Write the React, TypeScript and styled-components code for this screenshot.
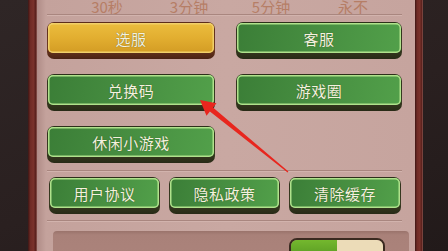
import React from "react";
import styled, { createGlobalStyle, css } from "styled-components";

const Global = createGlobalStyle`
  html, body { margin: 0; padding: 0; width: 448px; height: 251px; overflow: hidden; background: #2a2121; }
  * { box-sizing: border-box; }
`;

const Screen = styled.div`
  position: relative;
  width: 448px;
  height: 251px;
  display: flex;
  overflow: hidden;
  font-family: "Noto Sans CJK SC", "Noto Sans", sans-serif;
  background: linear-gradient(160deg, #2f2626 0%, #2a2020 55%, #221a1a 100%);
`;

const Side = styled.div<{ $w: number }>`
  width: ${(p) => p.$w}px;
  flex: none;
`;

const Rim = styled.div<{ $w: number }>`
  width: ${(p) => p.$w}px;
  flex: none;
  background: linear-gradient(90deg, #3c1614 0%, #6e2a24 25%, #7a322b 60%, #5a211d 85%, #8e5a53 100%);
`;

const Panel = styled.div`
  flex: 1;
  display: flex;
  flex-direction: column;
  padding: 0 13px 0 10px;
  background: linear-gradient(90deg, #b08c87 0px, #c4a29c 9px, #c9a8a2 50%, #c6a49e 100%);
`;

const Header = styled.div`
  height: 19px;
  display: grid;
  grid-template-columns: repeat(4, 82px);
  padding-left: 19px;
  align-items: start;
`;

const Label = styled.div`
  text-align: center;
  font-size: 15px;
  line-height: 16px;
  margin-top: -1px;
  color: #b67e66;
`;

const Rule = styled.div<{ $mt: number; $mb: number }>`
  height: 2px;
  margin: ${(p) => p.$mt}px 0 ${(p) => p.$mb}px;
  border-top: 1px solid #a9867f;
  border-bottom: 1px solid #d2b3ad;
`;

const Grid = styled.div`
  display: grid;
  grid-template-columns: 168px 166px;
  column-gap: 21px;
  row-gap: 15px;
`;

const Row3 = styled.div`
  display: grid;
  grid-template-columns: 111px 111px 112px;
  column-gap: 9px;
  padding-left: 2px;
`;

type Tone = "gold" | "green";

const Btn = styled.div<{ $tone: Tone }>`
  height: 37px;
  border-radius: 7px;
  padding: 1px 1px 6px 1px;
  ${(p) =>
    p.$tone === "gold"
      ? css`
          background: linear-gradient(180deg, #5c2c1a, #6e3a1f 70%, #4a2214);
        `
      : css`
          background: linear-gradient(180deg, #2c3019, #3a3d22 70%, #282a16);
        `}
`;

const Face = styled.div<{ $tone: Tone }>`
  height: 100%;
  border-radius: 5px;
  display: flex;
  align-items: center;
  justify-content: center;
  font-size: 15px;
  color: #f4f1de;
  letter-spacing: 0.5px;
  text-shadow: 0 0 1px rgba(30, 40, 10, 0.6);
  ${(p) =>
    p.$tone === "gold"
      ? css`
          background: linear-gradient(180deg, #ebbd3e 0%, #e2ae30 50%, #d39c24 100%);
          box-shadow: inset 0 0 0 1.5px #f1d06a;
        `
      : css`
          background: linear-gradient(100deg, #3b7e37 0%, #468d40 45%, #52a04a 100%);
          box-shadow: inset 0 0 0 1.5px #b0e28c;
        `}
`;

const Bottom = styled.div`
  margin: 9px -7px 0 6px;
  flex: 1;
  display: flex;
  justify-content: flex-end;
  padding: 7px 24px 0 0;
  border-radius: 4px 4px 0 0;
  background: linear-gradient(180deg, #9a736b 0px, #a98179 4px, #ab837b 100%);
`;

const Toggle = styled.div`
  width: 96px;
  height: 20px;
  border-radius: 8px;
  border: 2px solid #3a2a20;
  display: flex;
  overflow: hidden;
`;

const ToggleHalf = styled.div<{ $on?: boolean }>`
  flex: 1;
  background: ${(p) => (p.$on ? "linear-gradient(180deg,#74b82e,#5a9c24)" : "#ecdcb8")};
`;

const Overlay = styled.svg`
  position: absolute;
  left: 0;
  top: 0;
  pointer-events: none;
`;

const Button = ({ tone = "green", children }: { tone?: Tone; children: React.ReactNode }) => (
  <Btn $tone={tone}>
    <Face $tone={tone}>{children}</Face>
  </Btn>
);

export default function App() {
  return (
    <>
      <Global />
      <Screen>
        <Side $w={28} />
        <Rim $w={9} />
        <Panel>
          <Header>
            <Label>30秒</Label>
            <Label>3分钟</Label>
            <Label>5分钟</Label>
            <Label>永不</Label>
          </Header>
          <Rule $mt={-1} $mb={6} />
          <Grid>
            <Button tone="gold">选服</Button>
            <Button>客服</Button>
            <Button>兑换码</Button>
            <Button>游戏圈</Button>
            <Button>休闲小游戏</Button>
          </Grid>
          <Rule $mt={7} $mb={5} />
          <Row3>
            <Button>用户协议</Button>
            <Button>隐私政策</Button>
            <Button>清除缓存</Button>
          </Row3>
          <Rule $mt={6} $mb={0} />
          <Bottom>
            <Toggle>
              <ToggleHalf $on />
              <ToggleHalf />
            </Toggle>
          </Bottom>
        </Panel>
        <Rim $w={8} />
        <Side $w={25} />
        <Overlay width="448" height="251" viewBox="0 0 448 251">
          <polygon
            points="200,100 216.5,103.3 213,107.6 288.4,171.4 287.6,172.6 209.9,111.4 206.5,115.7"
            fill="#e8261e"
          />
        </Overlay>
      </Screen>
    </>
  );
}
